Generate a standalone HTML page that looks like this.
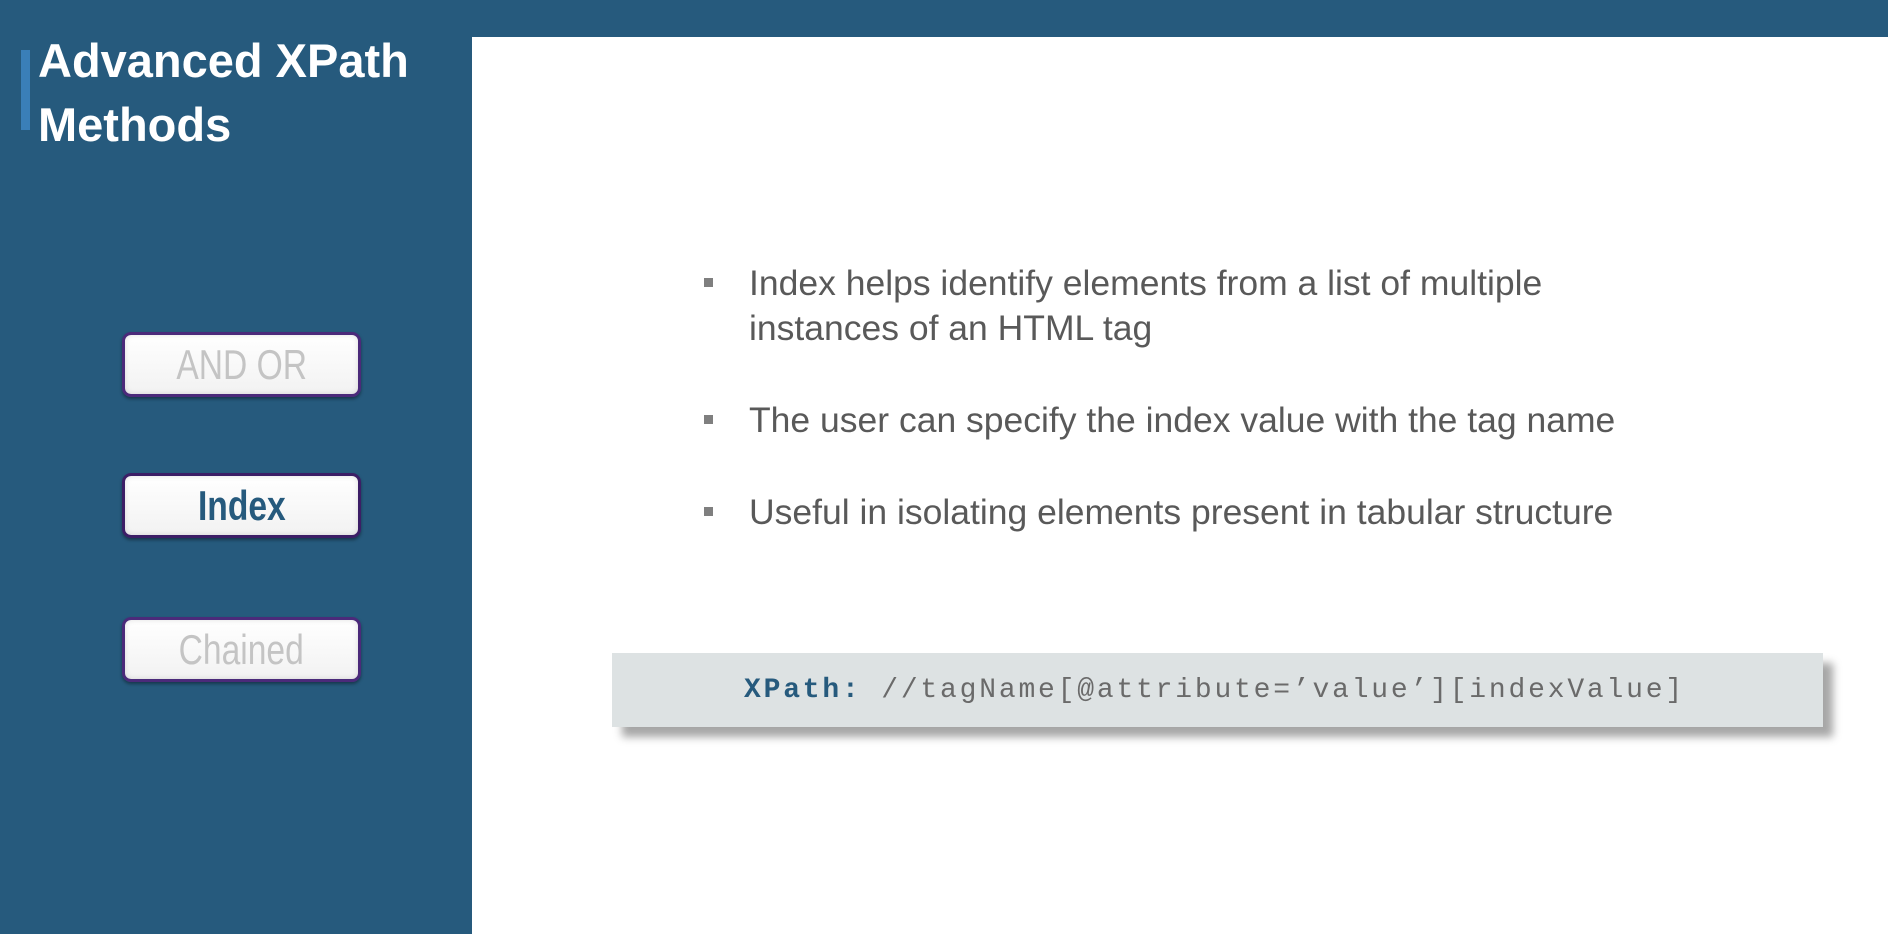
<!DOCTYPE html>
<html><head><meta charset="utf-8"><style>
html,body{margin:0;padding:0;width:1888px;height:934px;overflow:hidden;background:#265a7d;font-family:"Liberation Sans",sans-serif}
.top{position:absolute;left:0;top:0;width:1888px;height:37px;background:#265a7d}
.main{position:absolute;left:472px;top:37px;width:1416px;height:897px;background:#fff}
.acc{position:absolute;left:21px;top:50px;width:9px;height:80px;background:#3a7fb8}
.title{position:absolute;left:38px;top:29px;color:#fff;font-weight:bold;font-size:47px;line-height:64px}
.btn{position:absolute;left:122px;width:233px;height:59px;border-radius:9px;background:linear-gradient(#fff,#f2f2f2);border:3px solid #4b2a7a;box-shadow:0 2px 3px rgba(0,0,0,.4),inset 0 0 6px rgba(0,0,0,.12);text-align:center;font-family:"Liberation Sans Narrow","Liberation Sans",sans-serif}
.btn span{display:inline-block;transform:scaleX(.8);font-size:42px;line-height:59px;color:#c4c4c4}
.li{position:absolute;left:749px;color:#595959;font-size:35.5px;line-height:45px}
.sq{position:absolute;left:704px;width:9px;height:9px;background:#7f7f7f}
.code{position:absolute;left:612px;top:653px;width:1211px;height:74px;background:#dde2e3;box-shadow:10px 10px 8px rgba(0,0,0,.35)}
.code div{position:absolute;left:132px;top:22px;font-family:"Liberation Mono",monospace;font-size:28px;letter-spacing:2.8px;color:#6a6a6a;white-space:nowrap}
.code b{color:#265a7d}
</style></head><body>
<div class="top"></div>
<div class="main"></div>
<div class="acc"></div>
<div class="title">Advanced XPath<br>Methods</div>
<div class="btn" style="top:332px"><span>AND OR</span></div>
<div class="btn" style="top:473px;border-color:#3c1e66"><span style="color:#265a7d;font-weight:bold">Index</span></div>
<div class="btn" style="top:617px"><span>Chained</span></div>
<div class="sq" style="top:278px"></div>
<div class="li" style="top:261px">Index helps identify elements from a list of multiple<br>instances of an HTML tag</div>
<div class="sq" style="top:415px"></div>
<div class="li" style="top:398px">The user can specify the index value with the tag name</div>
<div class="sq" style="top:507px"></div>
<div class="li" style="top:490px">Useful in isolating elements present in tabular structure</div>
<div class="code"><div><b>XPath:</b> //tagName[@attribute=’value’][indexValue]</div></div>
</body></html>
